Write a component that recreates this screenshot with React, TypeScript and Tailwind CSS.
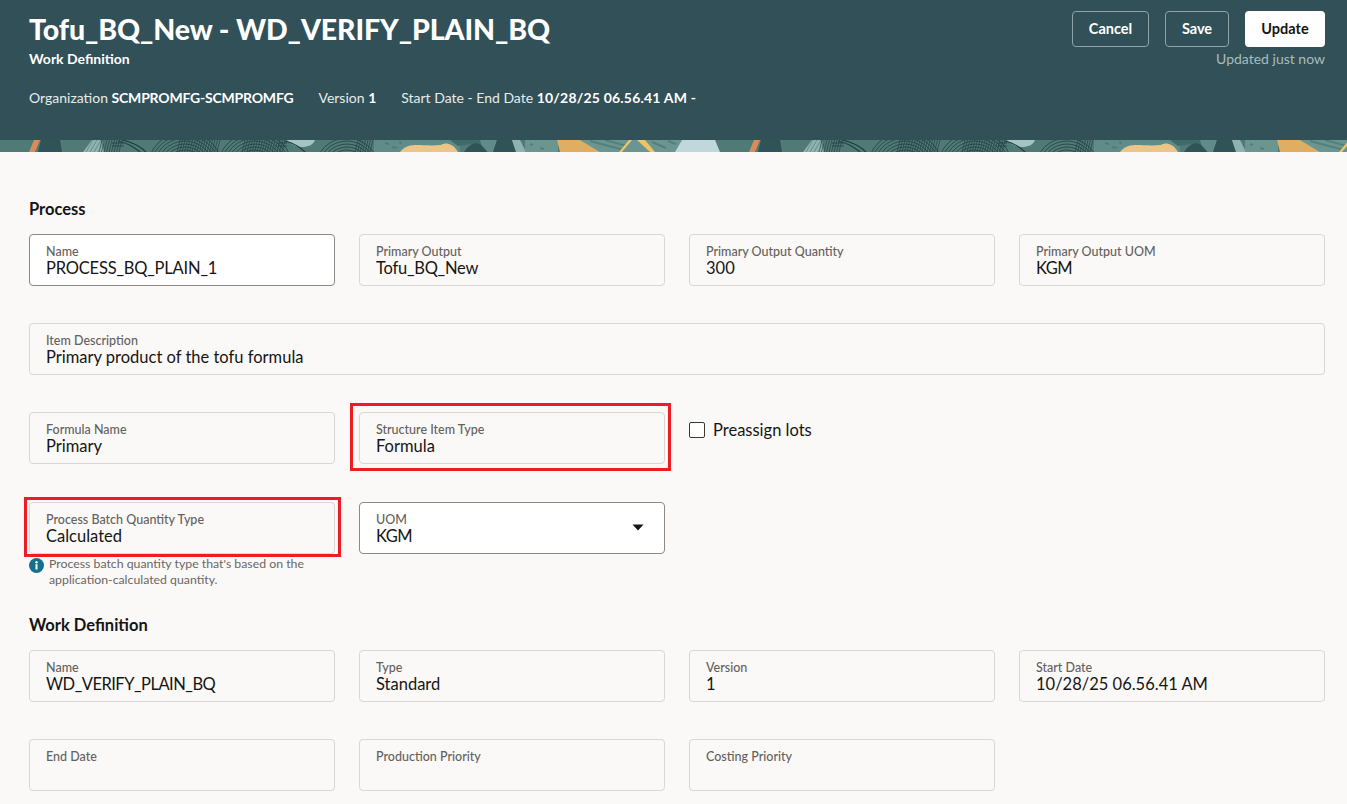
import React from "react";

const FONT = { fontFamily: 'Lato, "Noto Sans", sans-serif' };

const RADII = [20, 23, 26, 29, 32, 35, 38];
// hatch groups in the banner: [from x, to x]
const HATCH = [
  [102, 122],
  [180, 220],
  [245, 286],
  [358, 374],
];

function xs(from: number, to: number) {
  const out: number[] = [];
  for (let x = from; x <= to; x += 2.5) out.push(x);
  return out;
}

function Banner() {
  return (
    <svg width="100%" height="12" className="block">
      <defs>
        <pattern id="tile" width="720" height="12" patternUnits="userSpaceOnUse">
          <rect width="720" height="12" fill="#4f7a76" />
          <polygon points="34,0 40,0 35,12 29,12" fill="#dc8a58" />
          <polygon points="41,0 60,0 62,12 38,12" fill="#2f5356" />
          <polygon points="92,0 101,0 104,12 83,12" fill="#8fb3b0" />
          <path d="M287 0h28c-2 5-7 7-13 7s-12-3-15-7z" fill="#a3c4c2" />
          <g fill="none" stroke="#1f3c3f" strokeWidth="0.8">
            {RADII.map((r) => (
              <React.Fragment key={r}>
                <circle cx="185" cy="30" r={r} />
                <circle cx="255" cy="30" r={r} />
                {r < 33 && <circle cx="347" cy="30" r={r} />}
              </React.Fragment>
            ))}
            {HATCH.map(([a, b]) =>
              xs(a, b).map((x) => <path key={x} d={`M${x} 0l-3 12`} opacity="0.85" />)
            )}
            <path d="M86 12l7-12M90 12l7-12M94 12l7-12M98 12l7-12" stroke="#5c8580" />
            <path d="M112 3h12M112 6h12M278 3h9M278 6h9" />
            <path d="M118 1c9 2 16 6 22 11M122 0c9 2 18 6 24 12M285 1c8 2 15 6 20 11" strokeWidth="1.2" />
          </g>
          <rect x="374" width="86" height="12" fill="#5f8c88" />
          <path d="M385 3l4 1M392 7l5 1M399 2l3 1" stroke="#4f7a76" strokeWidth="2" />
          <path d="M400 12c3-4 8-7 15-7 9 0 16 1 26 0 3-2 7-2 10 0 3 1 5 4 7 7z" fill="#edc48a" />
          <polygon points="450,0 497,0 493,12 487,12 476,3 458,6" fill="#3e6a69" />
          <polygon points="480,0 497,0 493,12 488,12 482,7" fill="#5f8c88" />
          <path d="M464 12c3-5 8-9 12-9s8 4 11 9z" fill="#2f5356" />
          <polygon points="497,0 512,0 516,12 493,12" fill="#2f5356" />
          <polygon points="512,0 520,0 526,12 516,12" fill="#8fb3b0" />
          <rect x="525" width="33" height="12" fill="#6a9590" />
          <path d="M530 4l3 1M540 8l4 1" stroke="#557f7b" strokeWidth="2" />
          <polygon points="580,0 682,0 675,12 600,12" fill="#6a9590" />
          <polygon points="557,0 580,0 600,12 560,12" fill="#dfae62" />
          <path d="M590 1l34 9M605 0l22 6M652 2l14 6M668 1l8 3" stroke="#54807a" strokeWidth="2" />
          <polygon points="629,0 632,0 622,12 619,12" fill="#f0c460" />
          <polygon points="637,0 645,0 655,12 650,12" fill="#f0c460" />
          <polygon points="682,0 715,0 720,12 675,12" fill="#c0d8dc" />
        </pattern>
      </defs>
      <rect width="100%" height="12" fill="url(#tile)" />
    </svg>
  );
}

type FieldProps = {
  label: string;
  value?: string;
  editable?: boolean;
  select?: boolean;
  valueClass?: string;
};

function Field({ label, value, editable, select, valueClass = "" }: FieldProps) {
  return (
    <div
      className={`relative h-[52px] rounded px-4 pt-[9px] border ${
        editable ? "bg-white border-[#8b8885]" : "border-[#d9d6d3]"
      }`}
    >
      <div className="text-[12.5px] leading-[15px] text-[#65615d] font-medium">{label}</div>
      <div className={`text-[16.5px] leading-[19px] text-[#161513] ${valueClass}`}>{value}</div>
      {select && (
        <svg width="12" height="7" viewBox="0 0 12 7" className="absolute right-[20px] top-[21px]">
          <path d="M0.5 0.5h11L6 6.5z" fill="#161513" />
        </svg>
      )}
    </div>
  );
}

function Title({ children }: { children: React.ReactNode }) {
  return <h2 className="text-[16.5px] leading-[19px] font-bold text-[#161513]">{children}</h2>;
}

export default function App() {
  return (
    <div style={FONT} className="h-[804px] overflow-hidden bg-[#faf9f8]">
      <header className="h-[140px] bg-[#325057] pl-[29px] pr-[22px] flex justify-between text-white">
        <div className="pt-[11px]">
          <h1 className="text-[28.5px] leading-[36px] font-black tracking-[-0.1px]">Tofu_BQ_New - WD_VERIFY_PLAIN_BQ</h1>
          <div className="mt-[3px] text-[14px] leading-[18px] font-bold">Work Definition</div>
          <div className="mt-[21px] flex gap-[25px] text-[14px] leading-[18px] text-[#e6ecec]">
            <span>
              Organization <b className="font-bold text-white tracking-[-0.2px]">SCMPROMFG-SCMPROMFG</b>
            </span>
            <span>
              Version <b className="font-bold text-white">1</b>
            </span>
            <span>
              Start Date - End Date <b className="font-bold text-white tracking-[0.2px]">10/28/25 06.56.41 AM -</b>
            </span>
          </div>
        </div>
        <div className="pt-[11px] flex flex-col items-end">
          <div className="flex gap-4 text-[14.5px] font-bold">
            <button className="h-9 w-[77px] rounded border border-[#8da3a6]">Cancel</button>
            <button className="h-9 w-[64px] rounded border border-[#8da3a6]">Save</button>
            <button className="h-9 w-[80px] rounded bg-white text-[#161513]">Update</button>
          </div>
          <div className="mt-[3px] text-[14px] leading-[18px] text-[#a8bcbf]">Updated just now</div>
        </div>
      </header>
      <Banner />
      <main className="pl-[29px] pr-[22px] pt-[48px]">
        <Title>Process</Title>
        <div className="mt-[15px] grid grid-cols-4 gap-x-6">
          <Field label="Name" value="PROCESS_BQ_PLAIN_1" editable valueClass="tracking-[-0.2px]" />
          <Field label="Primary Output" value="Tofu_BQ_New" valueClass="tracking-[-0.25px]" />
          <Field label="Primary Output Quantity" value="300" />
          <Field label="Primary Output UOM" value="KGM" valueClass="tracking-[-0.5px]" />
        </div>
        <div className="mt-[37px]">
          <Field label="Item Description" value="Primary product of the tofu formula" />
        </div>
        <div className="mt-[37px] grid grid-cols-4 gap-x-6">
          <Field label="Formula Name" value="Primary" />
          <div className="relative">
            <Field label="Structure Item Type" value="Formula" />
            <div className="absolute -left-[9px] -right-[6px] -top-[9px] -bottom-[7px] border-[3px] border-[#ee1c25]" />
          </div>
          <label className="flex items-start gap-2 pt-[10px] text-[16.5px] leading-[16px] text-[#161513]">
            <span className="w-4 h-4 rounded-[2px] border border-[#3a3835] bg-white" />
            Preassign lots
          </label>
        </div>
        <div className="mt-[38px] grid grid-cols-4 gap-x-6">
          <div>
            <div className="relative">
              <Field label="Process Batch Quantity Type" value="Calculated" />
              <div className="absolute -left-[5px] -right-[6px] -top-[5px] -bottom-[3px] border-[3px] border-[#ee1c25]" />
            </div>
            <div className="mt-[2px] flex gap-[5px] text-[12.3px] leading-[16px] text-[#6b6763]">
              <svg width="15" height="15" viewBox="0 0 15 15" className="shrink-0 mt-[2px]">
                <circle cx="7.5" cy="7.5" r="7.5" fill="#14708f" />
                <rect x="6.5" y="6.2" width="2" height="5.3" fill="#fff" />
                <circle cx="7.5" cy="4.2" r="1.2" fill="#fff" />
              </svg>
              <p>Process batch quantity type that's based on the application-calculated quantity.</p>
            </div>
          </div>
          <Field label="UOM" value="KGM" editable select valueClass="tracking-[-0.5px]" />
        </div>
        <div className="mt-[28px]">
          <Title>Work Definition</Title>
        </div>
        <div className="mt-[15px] grid grid-cols-4 gap-x-6">
          <Field label="Name" value="WD_VERIFY_PLAIN_BQ" valueClass="tracking-[-0.5px]" />
          <Field label="Type" value="Standard" />
          <Field label="Version" value="1" />
          <Field label="Start Date" value="10/28/25 06.56.41 AM" />
        </div>
        <div className="mt-[37px] grid grid-cols-4 gap-x-6">
          <Field label="End Date" />
          <Field label="Production Priority" />
          <Field label="Costing Priority" />
        </div>
      </main>
    </div>
  );
}
